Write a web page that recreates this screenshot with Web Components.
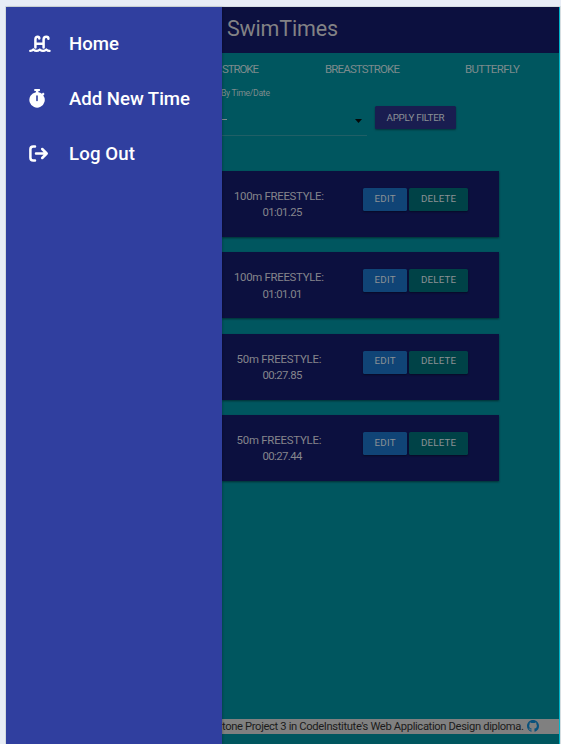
<!DOCTYPE html>
<html lang="en"><head><meta charset="utf-8"><title>SwimTimes</title>
<style>
html,body{margin:0;height:100%;overflow:hidden;background:#e8edf6}
body{font-family:Roboto,"Liberation Sans",sans-serif}
</style></head><body>
<swim-app></swim-app>
<script>
const define=(name,html,ready)=>customElements.define(name,class extends HTMLElement{
  constructor(){super();this.attachShadow({mode:'open'}).innerHTML=html;}
  connectedCallback(){if(ready)ready.call(this,this.shadowRoot);}
});

// Single line of text whose tracking is adjusted to fill the width given in "w".
define('fit-text',`<style>:host{display:block;white-space:nowrap}span{display:inline-block}</style><span><slot></slot></span>`,function(r){
  const s=r.querySelector('span'),w=+this.getAttribute('w');
  this.style.width=w+'px';
  s.style.letterSpacing='0px';
  s.style.letterSpacing=((w-s.getBoundingClientRect().width)/Math.max(1,this.textContent.length-1))+'px';
});

const icons={
pool:`<svg width="22" height="18" viewBox="0 0 22 18" fill="none" stroke="#fff" stroke-linecap="round"><path stroke-width="2.5" d="M6.4 12.4V4.4Q6.4 1.7 8.8 1.7Q10.2 1.7 10.3 3.4M14.6 12.4V4.4Q14.6 1.7 17.4 1.7Q19.4 1.7 19.4 3.7M6.4 8.8H14.6"/><path stroke-width="2.2" d="M1.2 15.9Q3 16 4.3 14.6Q7.5 17.1 10.8 14.6Q14 17.1 17.3 14.6Q18.8 16 20.6 15.9"/></svg>`,
watch:`<svg width="17" height="19" viewBox="0 0 17 19"><path fill="#fff" d="M5.3 0h5.6v2H9.4v1.3q2 .3 3.5 1.4l1.2-1.2 1.5 1.5-1.3 1.4A7.7 7.7 0 1 1 6.9 3.3V2H5.3z"/><path stroke="#303f9f" stroke-width="1.6" stroke-linecap="round" d="M8 7v4.5"/></svg>`,
out:`<svg width="20" height="17" viewBox="0 0 20 17" fill="none" stroke="#fff" stroke-width="2.5" stroke-linecap="round" stroke-linejoin="round"><path d="M6 1.4H4.2Q1.4 1.4 1.4 4.2v8.6q0 2.8 2.8 2.8H6M7 8.5h10.5M13.2 4l4.5 4.5-4.5 4.5"/></svg>`
};
define('drawer-item',`<style>:host{display:flex;align-items:center;height:55px;color:#fff;font-size:18.6px;font-weight:500}
i{width:40px;height:19px;display:flex;align-items:center}i svg{display:block;margin-left:-.5px}</style><i></i><slot></slot>`,function(r){
  r.querySelector('i').innerHTML=icons[this.getAttribute('icon')];
});
define('side-drawer',`<style>:host{display:block;box-sizing:border-box;width:216px;height:737px;background:#303f9f;padding:9px 0 0 23px;box-shadow:1px 0 2px #0003;position:relative;z-index:1}</style>
<drawer-item icon="pool"><fit-text w="50">Home</fit-text></drawer-item>
<drawer-item icon="watch"><fit-text w="121">Add New Time</fit-text></drawer-item>
<drawer-item icon="out"><fit-text w="66">Log Out</fit-text></drawer-item>`);

define('flat-button',`<style>:host{display:flex;box-sizing:border-box;align-items:center;justify-content:center;height:23px;border-radius:1.5px;color:#8b9195;font-size:9.8px;box-shadow:0 1px 2px #0006;background:var(--fill);padding-bottom:var(--lift,1px)}</style><slot></slot>`);

define('time-card',`<style>:host{display:grid;grid-template-columns:114px 27px 44px 59px;box-sizing:border-box;width:277px;height:66px;padding-top:16px;background:#0c103f;box-shadow:0 1px 2px #0007;color:#85858c;font-size:11.4px;--lift:3px}
.t{display:flex;flex-direction:column;align-items:center;line-height:16.4px;padding-top:.8px}
.t :last-child{margin-left:7px}
.e{grid-column:3;--fill:#104476;margin-top:1px}.d{--fill:#004247;margin:1px -2px 0 2px}</style>
<div class="t"></div><flat-button class="e"><fit-text w="21">EDIT</fit-text></flat-button><flat-button class="d"><fit-text w="35">DELETE</fit-text></flat-button>`,function(r){
  const e=this.getAttribute('event');
  r.querySelector('.t').innerHTML=`<fit-text w="${e.startsWith('100')?90:85}">${e}</fit-text><fit-text w="40">${this.getAttribute('time')}</fit-text>`;
});

define('app-header',`<style>:host{display:flex;align-items:center;box-sizing:border-box;height:46px;padding:0 0 3px 5px;background:#0c103f;color:#828285;font-size:21.5px}</style><fit-text w="111">SwimTimes</fit-text>`);
define('stroke-nav',`<style>:host{display:flex;height:32px;align-items:center;color:#7d8b8d;font-size:11.5px}
.b{margin-left:66px}.c{margin-left:65px}</style>
<fit-text w="37">STROKE</fit-text><fit-text class="b" w="75">BREASTSTROKE</fit-text><fit-text class="c" w="55">BUTTERFLY</fit-text>`);
define('filter-bar',`<style>:host{display:block;height:86px;color:#7d8b8d}
.l{display:block;font-size:8.7px;line-height:16px;margin-left:-1px}
.row{display:flex;gap:8px;padding-top:5px}
.s{width:145px;height:30px;border-bottom:1px solid #205f66;display:flex;align-items:center;box-sizing:border-box;justify-content:space-between;padding-right:5px}
.s u{width:5px;height:1px;background:#7d8b8d;margin-bottom:3px}
flat-button{width:81px;--fill:#191d50}</style>
<fit-text class="l" w="49">By Time/Date</fit-text>
<div class="row"><div class="s"><u></u><svg width="7" height="4"><path d="M0 0h7L3.5 4z" fill="#050808"/></svg></div>
<flat-button><fit-text w="58">APPLY FILTER</fit-text></flat-button></div>`);
define('page-footer',`<style>:host{display:flex;align-items:center;height:15px;margin-top:auto;margin-bottom:10px;background:#808080;color:#1b1b1b;font-size:11.2px;line-height:15px}
svg{margin-left:3px;margin-top:-2px}</style><fit-text w="302">tone Project 3 in CodeInstitute's Web Application Design diploma.</fit-text>
<svg width="12" height="12" viewBox="0 0 16 16"><path fill="#08517c" d="M8 0C3.58 0 0 3.58 0 8c0 3.54 2.29 6.53 5.47 7.59.4.07.55-.17.55-.38 0-.19-.01-.82-.01-1.49-2.01.37-2.53-.49-2.69-.94-.09-.23-.48-.94-.82-1.13-.28-.15-.68-.52-.01-.53.63-.01 1.08.58 1.23.82.72 1.21 1.87.87 2.33.66.07-.52.28-.87.51-1.07-1.78-.2-3.64-.89-3.64-3.95 0-.87.31-1.59.82-2.15-.08-.2-.36-1.02.08-2.12 0 0 .67-.21 2.2.82.64-.18 1.32-.27 2-.27s1.36.09 2 .27c1.53-1.04 2.2-.82 2.2-.82.44 1.1.16 1.92.08 2.12.51.56.82 1.27.82 2.15 0 3.07-1.87 3.75-3.65 3.95.29.25.54.73.54 1.48 0 1.07-.01 1.93-.01 2.2 0 .21.15.46.55.38A8.01 8.01 0 0 0 16 8c0-4.42-3.58-8-8-8z"/></svg>`);

define('swim-app',`<style>:host{display:grid;grid-template-columns:216px 337px;width:553px;height:737px;margin:7px 0 0 6px;border-right:1px solid #00b4ca;box-shadow:0 0 0 1px #d5dde0}
main{display:flex;flex-direction:column;background:#00565f;overflow:hidden;height:737px}
.cards{display:flex;flex-direction:column;gap:15.4px}</style>
<side-drawer></side-drawer>
<main><app-header></app-header><stroke-nav></stroke-nav><filter-bar></filter-bar>
<div class="cards"><time-card event="100m FREESTYLE:" time="01:01.25"></time-card><time-card event="100m FREESTYLE:" time="01:01.01"></time-card><time-card event="50m FREESTYLE:" time="00:27.85"></time-card><time-card event="50m FREESTYLE:" time="00:27.44"></time-card></div>
<page-footer></page-footer></main>`);
</script></body></html>
